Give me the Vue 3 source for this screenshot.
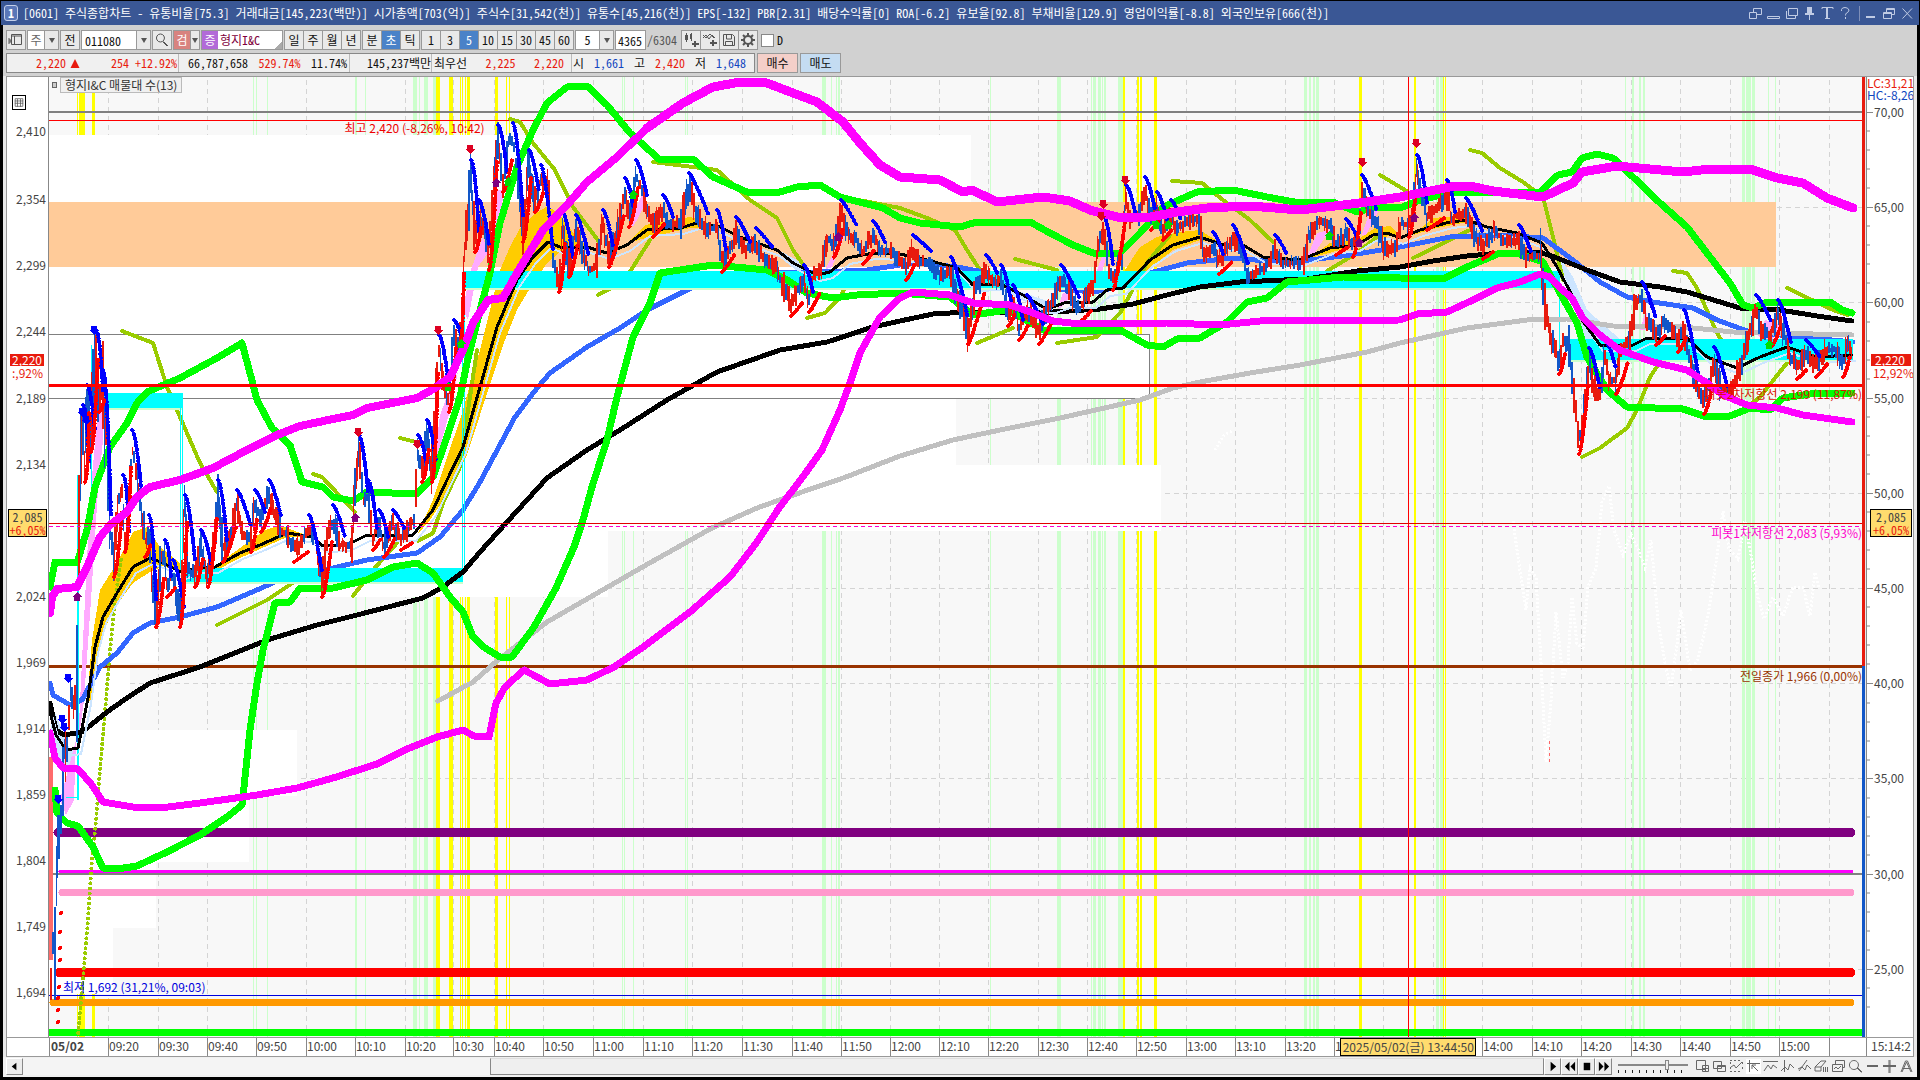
<script setup>
import { ref } from 'vue'

const VX = 49
const VY = 77
const VW = 1813
const VH = 960
const topPct = (y) => ({ top: ((y - VY) / VH) * 100 + '%' })

const code = ref('011080')
const count = ref('4365')

const periods = ['일', '주', '월', '년']
const units = ['분', '초', '틱']
const steps = ['1', '3', '5', '10', '15', '30', '45', '60']

const leftLabels = [
  ['2,410', 131], ['2,354', 199], ['2,299', 265], ['2,244', 331], ['2,189', 398], ['2,134', 464],
  ['2,024', 596], ['1,969', 662], ['1,914', 728], ['1,859', 794], ['1,804', 860], ['1,749', 926], ['1,694', 992],
]
const rightLabels = [
  ['70,00', 112], ['65,00', 207], ['60,00', 302], ['55,00', 398], ['50,00', 493],
  ['45,00', 588], ['40,00', 683], ['35,00', 778], ['30,00', 874], ['25,00', 969],
]
const minorTicks = Array.from({ length: 48 }, (_, i) => 112 + i * 19.05).filter((y, i) => i % 5 && y < 1030)

const gridX = [108, 158, 207, 256, 306, 355, 405, 453, 494, 543, 593, 643, 692, 742, 792, 841, 890, 939, 988, 1038, 1087, 1136, 1186, 1235, 1285, 1334, 1383, 1433, 1482, 1532, 1581, 1631, 1680, 1730, 1779, 1829]
const gridY = [207, 302, 398, 493, 588, 683, 778, 969]
const times = ['09:20', '09:30', '09:40', '09:50', '10:00', '10:10', '10:20', '10:30', '10:40', '10:50', '11:00', '11:10', '11:20', '11:30', '11:40', '11:50', '12:00', '12:10', '12:20', '12:30', '12:40', '12:50', '13:00', '13:10', '13:20', '1', '', '', '14:00', '14:10', '14:20', '14:30', '14:40', '14:50', '15:00', '']
const timeCells = [{ t: '05/02', w: 59 }].concat(
  times.map((t, i) => ({ t, w: (gridX[i + 1] ?? 1866) - gridX[i] })),
)

const greenBands = [[253, 1], [256, 1], [267, 1], [355, 2], [365, 1], [413, 4], [419, 1], [424, 4], [433, 3], [622, 1], [624, 1], [633, 1], [685, 1], [687, 1], [822, 4], [831, 1], [836, 1], [838, 2], [990, 1], [1057, 4], [1091, 1], [1093, 3], [1098, 3], [1102, 1], [1104, 2], [1118, 5], [1304, 3], [1309, 2], [1313, 2], [1316, 3], [1436, 3], [1440, 3], [1625, 1], [1632, 2], [1639, 2], [1643, 2], [1742, 3], [1746, 5], [1752, 3], [1768, 1], [1775, 1]]
const yellowBands = [[77, 1], [79, 6], [92, 3], [436, 4], [449, 4], [460, 1], [462, 1], [465, 1], [467, 3], [495, 3], [506, 1], [509, 1], [1123, 2], [1137, 2], [1140, 2], [1154, 3], [1359, 3], [1414, 2], [1443, 1], [1445, 1]]
const whiteBars = [[135, 67, 971], [267, 67, 960], [334, 64, 1149], [398, 67, 956], [465, 66, 1161], [531, 66, 608], [597, 66, 158], [663, 67, 130], [730, 66, 297], [796, 66, 249], [862, 66, 156], [928, 66, 113]]

const magUp = '50,613 52,597 57,589 77,587 87,567 100,537 110,525 127,512 137,497 150,487 180,480 213,468 247,450 277,435 300,426 333,419 353,415 367,408 417,398 435,388 450,377 463,350 473,323 488,300 503,298 517,273 543,230 567,205 587,182 617,157 647,128 683,103'
const magTop = '647,128 683,103 713,87 740,82 767,83 793,93 817,102 843,122 860,143 880,165 900,177 940,180 963,192 972,190 997,202 1043,197 1070,201 1090,210 1117,217 1150,217 1177,212 1207,208 1250,206 1300,210 1343,205 1367,202 1400,197 1450,187 1470,186 1493,191 1543,197 1573,183 1582,172 1617,166 1683,172 1710,169 1750,169 1777,178 1803,183 1827,198 1853,208'
const magLow = '50,733 55,758 63,768 78,769 92,785 103,802 133,807 160,808 200,803 257,795 297,788 333,778 377,764 407,749 437,737 463,730 474,736 489,737 496,703 505,687 524,670 550,684 587,680 614,667 646,645 690,612 730,577 757,542 779,508 802,478 822,450 840,410 850,383 860,353 880,317 900,298 913,292 950,295 973,303 1010,305 1033,313 1053,321 1080,324 1167,323 1220,325 1260,321 1400,320 1417,314 1447,312 1473,300 1497,288 1520,282 1540,274 1550,277 1560,288 1572,298 1582,317 1600,335 1620,350 1653,362 1687,370 1707,383 1723,395 1747,405 1777,408 1803,415 1852,422'
const grnUp = '50,587 55,562 77,563 87,530 95,487 110,447 127,423 137,403 147,392 180,378 217,358 242,343 250,373 257,400 272,428 290,445 302,482 323,487 333,497 353,501 367,492 417,494 433,477 447,437 460,397 467,363 480,310 490,273 500,223 517,167 533,130 547,103 567,87 587,86 607,105 630,133 660,160 693,159 713,177 747,192 780,192 797,187 820,185 840,197 883,208 900,218 920,223 960,227 973,223 1030,222 1050,233 1073,245 1093,253 1120,253 1140,233 1163,207 1197,192 1233,190 1267,197 1300,203 1333,202 1357,212 1377,207 1400,208 1420,200 1453,192 1493,192 1540,192 1558,175 1572,172 1582,158 1597,154 1613,158 1633,177 1660,203 1687,227 1710,257 1730,283 1743,305 1753,308 1767,302 1830,302 1842,310 1852,313'
const grnLow = '55,790 57,813 67,823 78,826 93,847 103,868 117,869 137,866 167,852 200,835 227,817 242,805 244,787 250,730 257,683 263,650 275,603 290,602 300,588 333,588 367,580 393,567 417,563 433,573 450,597 463,612 473,637 485,648 500,657 512,657 534,627 556,588 574,547 583,520 592,487 607,440 617,397 633,337 650,303 660,273 713,265 767,270 787,280 807,293 833,298 857,295 900,293 950,297 973,315 1007,310 1023,318 1043,330 1120,330 1147,345 1163,347 1177,339 1200,338 1227,322 1247,302 1267,298 1287,282 1343,277 1400,278 1443,279 1467,267 1500,253 1520,254 1543,262 1560,293 1577,323 1587,357 1607,390 1627,407 1683,409 1707,417 1730,416 1750,408 1770,410 1783,398 1817,393 1852,393'
const blueMa = '50,683 53,695 70,705 82,700 100,667 117,653 133,633 150,623 180,617 217,607 257,590 290,575 333,568 367,560 417,553 440,537 463,510 480,482 515,417 533,393 550,373 587,347 620,328 647,310 687,290 713,278 750,273 817,272 867,270 900,265 920,263 957,267 1000,275 1027,282 1060,289 1093,292 1120,287 1150,273 1187,263 1233,258 1277,262 1310,260 1350,255 1400,247 1450,237 1500,235 1543,238 1573,260 1600,282 1627,297 1653,302 1693,308 1717,320 1750,332 1800,337 1853,342'
const blackMa = '50,703 56,730 64,735 82,732 107,712 127,698 150,683 200,667 267,640 317,625 357,615 423,598 443,587 463,572 480,552 507,522 547,478 587,450 620,430 667,400 717,372 780,350 827,342 873,327 900,321 933,314 967,312 1053,312 1100,309 1133,304 1167,295 1200,287 1240,282 1307,279 1357,271 1400,267 1433,261 1467,256 1500,253 1540,252 1557,258 1587,270 1620,282 1660,287 1687,292 1740,308 1780,310 1817,316 1852,321'
const thinMa = '50,712 56,735 66,750 78,748 88,698 95,647 103,617 117,593 133,567 150,558 163,563 183,573 197,567 215,567 240,553 260,545 287,533 313,537 323,546 347,545 367,535 413,535 433,510 447,480 463,447 480,387 497,327 517,280 533,257 548,242 560,247 587,247 607,253 627,245 647,230 680,228 697,223 720,227 740,237 777,250 793,263 817,275 830,272 847,258 873,253 900,254 927,260 957,268 973,285 1000,284 1023,295 1043,307 1053,307 1067,302 1093,302 1107,290 1123,288 1150,260 1173,245 1200,237 1220,244 1243,245 1263,257 1300,260 1330,248 1357,245 1373,235 1387,233 1400,238 1420,230 1450,222 1467,220 1487,227 1517,233 1542,243 1557,267 1573,297 1582,320 1600,345 1633,345 1647,338 1687,338 1707,357 1737,368 1760,357 1787,347 1817,357 1852,355'
const grayMa = '438,701 473,682 498,660 547,622 646,565 712,528 757,508 802,492 846,477 900,456 953,440 1000,430 1060,418 1100,409 1140,400 1173,388 1200,382 1250,373 1300,365 1367,352 1400,343 1467,328 1527,320 1567,319 1613,326 1683,327 1733,332 1852,335'

const olive = [
  '122,331 153,343 167,387 200,463 217,492', '217,625 267,600 300,578 310,573', '313,474 322,477 355,512',
  '353,596 373,570 397,543', '400,438 420,443', '418,541 433,533 443,503 460,467 467,417 477,350',
  '510,119 520,122 533,143 555,170 573,207 600,243', '598,295 623,282 633,267 650,240',
  '653,162 717,170 750,200 777,218 793,250 807,270', '807,318 825,313 840,297 852,275',
  '843,197 900,208 927,218 955,230 967,250 980,270', '977,343 1013,328', '1015,259 1057,270',
  '1057,343 1097,337 1120,313 1147,263 1170,235', '1172,181 1202,183 1223,200 1250,220 1273,242',
  '1327,271 1357,253 1377,237', '1380,175 1400,187 1408,192', '1470,150 1482,153 1500,168 1523,182 1543,197 1553,237 1563,280',
  '1413,258 1470,230', '1582,457 1600,448 1627,428 1637,410 1650,377 1673,343',
  '1673,271 1687,273 1697,288 1717,333 1733,360', '1740,413 1760,397 1787,363', '1787,288 1833,310 1848,315',
]
const oliveDots = '121,560 115,600 110,650 106,700 100,770 96,820 92,860 88,920 82,990 78,1035'

const goldClouds = [
  '88,690 92,640 100,590 117,563 133,532 147,527 160,547 180,563 183,573 163,566 150,572 133,583 113,610 103,633 93,683 90,705',
  '215,566 240,548 265,530 280,525 300,533 313,537 287,537 260,549 240,558 215,571',
  '417,535 433,500 447,457 460,420 470,385 480,350 490,310 500,270 510,247 520,228 533,215 548,206 560,215 575,235 587,247 560,252 548,262 533,283 517,310 505,340 495,370 480,415 467,455 447,495 430,520',
  '627,243 645,225 690,217 720,227 690,228 650,237',
  '1107,290 1125,270 1140,247 1157,237 1180,232 1200,230 1220,243 1200,240 1173,250 1150,268 1123,290',
  '1310,258 1330,243 1357,240 1375,228 1390,226 1400,236 1373,237 1340,250',
  '1413,235 1433,218 1467,215 1467,222 1433,229',
]
const pinkClouds = [
  '78,745 83,640 90,500 97,420 103,405 103,440 98,490 91,600 84,700',
  '431,490 440,415 450,388 458,372 450,410 442,440',
  '463,310 470,272 483,237 488,253 478,267 468,320', '490,227 497,190 505,190 500,213 492,240',
  '630,220 643,193 646,203 633,227', '825,270 840,240 847,230 832,267', '1057,310 1063,293 1073,293 1062,307',
  '1097,270 1102,257 1106,257 1101,276', '1307,257 1317,233 1330,230 1312,257', '1362,235 1372,205 1378,212 1366,235',
  '60,800 68,770 76,740 74,800 66,815', '1640,330 1646,310 1650,330', '1757,335 1765,320 1780,325 1770,345',
]
const iceClouds = [
  '1557,253 1573,277 1587,310 1613,333 1620,340 1577,340 1582,313 1570,293',
  '957,268 980,280 1010,288 1053,303 1043,309 1023,298 1000,288 973,288', '50,705 56,715 70,750 76,745 72,765 60,765 52,745',
  '777,249 800,262 812,275 795,268',
]

const price = [
  50, 985, 52, 940, 54, 955, 56, 870, 59, 810, 61, 830, 63, 735, 65, 760, 68, 720, 70, 690, 72, 712, 76, 690, 78, 520, 82, 420, 84, 470, 86, 400, 90, 440, 95, 345, 98, 400, 102, 385, 107, 460, 110, 530, 113, 565, 118, 500, 122, 490, 124, 540, 128, 510, 131, 445, 135, 470, 140, 500, 144, 545, 148, 530, 151, 580, 155, 615, 160, 560, 164, 555, 166, 585, 172, 575, 179, 615, 184, 510, 188, 570, 194, 575, 200, 545, 207, 575, 212, 555, 217, 495, 222, 550, 230, 535, 236, 505, 242, 535, 250, 540, 254, 505, 260, 520, 268, 495, 273, 510, 280, 530, 286, 535, 293, 550, 302, 540, 308, 530, 316, 540, 321, 585, 326, 540, 332, 520, 340, 545, 350, 545, 358, 450, 363, 500, 367, 495, 372, 538, 378, 525, 383, 545, 392, 525, 400, 538, 410, 525, 414, 520, 417, 450, 421, 470, 426, 435, 431, 470, 436, 365, 438, 350, 442, 380, 448, 400, 453, 335, 458, 350, 462, 295, 464, 250, 470, 175, 474, 240, 478, 215, 484, 230, 488, 258, 492, 190, 497, 140, 502, 180, 508, 142, 512, 138, 516, 170, 522, 230, 528, 165, 534, 200, 540, 180, 547, 190, 552, 265, 558, 280, 562, 228, 568, 265, 575, 230, 580, 245, 588, 270, 594, 268, 602, 225, 608, 255, 616, 235, 624, 193, 628, 215, 635, 175, 640, 188, 646, 210, 652, 225, 662, 210, 668, 225, 680, 222, 688, 188, 696, 215, 708, 230, 716, 225, 721, 260, 730, 250, 735, 232, 745, 250, 755, 243, 762, 260, 772, 262, 780, 280, 790, 304, 797, 290, 803, 280, 808, 300, 813, 275, 820, 270, 828, 240, 833, 245, 840, 215, 848, 235, 856, 240, 862, 252, 872, 236, 880, 250, 890, 250, 900, 262, 905, 268, 912, 250, 920, 262, 930, 265, 940, 275, 950, 272, 958, 302, 967, 332, 975, 290, 985, 270, 993, 283, 1000, 280, 1007, 314, 1012, 300, 1018, 328, 1026, 310, 1038, 332, 1046, 310, 1052, 300, 1060, 280, 1068, 290, 1078, 311, 1085, 297, 1093, 287, 1097, 248, 1103, 232, 1108, 270, 1112, 278, 1122, 255, 1125, 200, 1130, 220, 1138, 212, 1144, 192, 1150, 218, 1156, 207, 1162, 228, 1170, 215, 1176, 228, 1190, 220, 1198, 220, 1203, 255, 1212, 247, 1218, 262, 1226, 249, 1232, 240, 1240, 250, 1247, 278, 1256, 270, 1264, 268, 1274, 250, 1282, 263, 1290, 263, 1303, 263, 1308, 234, 1318, 222, 1328, 225, 1335, 243, 1345, 234, 1352, 245, 1358, 232, 1361, 190, 1368, 210, 1376, 225, 1385, 250, 1394, 245, 1400, 224, 1408, 225, 1412, 214, 1416, 170, 1420, 190, 1426, 218, 1436, 207, 1446, 195, 1450, 220, 1456, 215, 1465, 213, 1474, 235, 1482, 247, 1490, 237, 1493, 230, 1500, 238, 1508, 243, 1518, 240, 1526, 260, 1532, 255, 1540, 255, 1545, 315, 1551, 338, 1558, 362, 1562, 340, 1568, 345, 1573, 390, 1578, 442, 1583, 410, 1588, 363, 1595, 398, 1600, 390, 1604, 355, 1609, 380, 1615, 382, 1620, 350, 1628, 340, 1634, 305, 1641, 297, 1646, 320, 1655, 333, 1663, 322, 1670, 330, 1677, 340, 1683, 325, 1690, 368, 1698, 393, 1703, 402, 1709, 380, 1713, 362, 1722, 394, 1730, 388, 1740, 365, 1750, 330, 1755, 310, 1761, 330, 1770, 335, 1777, 315, 1782, 330, 1790, 356, 1796, 367, 1805, 355, 1815, 365, 1825, 350, 1835, 350, 1842, 365, 1847, 342, 1851, 350,
]
const pts = []
for (let i = 0; i < price.length; i += 2) pts.push([price[i], price[i + 1]])

let seed = 7
const rnd = () => (seed = (seed * 16807) % 2147483647) / 2147483647

const bars = { red: '', blue: '' }
let k = 0
let x = 50
while (x < 1852) {
  while (k < pts.length - 2 && pts[k + 1][0] <= x) k++
  const [x0, y0] = pts[k]
  const [x1, y1] = pts[k + 1]
  const mid = y0 + ((y1 - y0) * (x - x0)) / (x1 - x0)
  const amp = Math.min(x < 110 ? 56 : 24, 6 + Math.abs(y1 - y0) / (x < 110 ? 2 : 4))
  const name = rnd() < (y1 < y0 ? 0.66 : 0.45) ? 'red' : 'blue'
  const w = rnd() < 0.45 ? 1 : 2
  const top = Math.round(mid - amp * (0.3 + rnd()))
  const bot = Math.round(mid + amp * (0.3 + rnd()))
  bars[name] += `M${x} ${top}h${w}V${bot}h-${w}Z`
  x += w
}

// Trailing stops: falling arcs after each peak, rising arcs after each trough.
let stopDown = ''
let stopUp = ''
for (let i = 1; i < pts.length - 1; i++) {
  const [px, y] = pts[i]
  const prev = pts[i - 1][1]
  const [nx, ny] = pts[i + 1]
  const [mx, my] = pts[Math.min(i + 2, pts.length - 1)]
  if (px < 74) continue
  if (y < prev && y < ny && ny - y > 8) {
    const ex = my > ny ? mx : nx + 4
    const ey = my > ny ? my - 14 : ny - 8
    stopDown += `M${px + 1} ${y - 15}Q${px + 5} ${y - 12} ${ex + 1} ${ey}`
  }
  if (y > prev && y > ny && y - ny > 8) {
    const ex = my < ny ? mx : nx + 3
    const ey = my < ny ? my + 22 : ny + 13
    stopUp += `M${px + 1} ${y + 12}Q${px + 4} ${y + 10} ${ex} ${ey}`
  }
}
let ghost = ''
let pen = 'M'
for (const [gx, y] of pts) {
  const gy = Math.round(340 + (y - 220) * 1.9)
  if (gx < 1200 || gy < 430) {
    pen = 'M'
    continue
  }
  ghost += `${pen}${gx - 32} ${gy}`
  pen = 'L'
}

const marks = [
  ...[[438, 330], [358, 432], [417, 444], [470, 149], [1125, 180], [1103, 204], [1101, 216], [1362, 162], [1416, 143]].map((p) => [...p, '#dd0022', 0]),
  ...[[94, 330], [82, 412], [86, 420], [68, 678], [62, 719], [64, 727], [58, 799]].map((p) => [...p, '#0000ff', 0]),
  ...[[77, 597], [355, 518], [496, 183], [838, 237], [1359, 243], [1414, 218]].map((p) => [...p, '#800080', 180]),
  ...[[448, 387], [461, 344], [508, 182], [633, 195], [1156, 225], [1168, 225], [1329, 236], [1769, 345]].map((p) => [...p, '#00dd00', 180]),
]
const redDots = [[61, 913], [60, 932], [60, 948], [60, 960], [59, 987], [58, 998], [58, 1010], [58, 1022]]

const winIcons = [
  { n: '분리', d: 'M1.5 6.5h7v6h-7zM5.5 6V2.5h8v6H9' },
  { n: '숨김', d: 'M1.5 10.5h12v2h-12z' },
  { n: '복사', d: 'M4.5 2.5h9v7h-9zM2.5 5v7.500h9V10' },
  { n: '고정', d: 'M5 1.500h5M5.500 2v5M7.500 2v12M6.500 2v5M8.500 2v5M9.500 2v5M3 8.500h9M3 7.500h9' },
  { n: '글꼴', d: 'M2 3V1.500h11V3M7.500 2v10M6.500 2v10M5 12.500h5' },
  { n: '도움말', d: 'M3.500 5V3.500Q4 1.500 7 1.500T11 4Q11 6 8.500 7Q7.500 8 7.500 9.500M7.500 11v2' },
]
const ctlIcons = [
  { n: '최소화', d: 'M2 10.500h9M2 11.500h9' },
  { n: '이전 크기', d: 'M1.500 6.500h8v6h-8zM2 7.500h7M4.500 6V2.500h8v6H10M5 3.500h7' },
  { n: '닫기', d: 'M2.500 2.500L12 12.500M12 2.500L2.500 12.500' },
]
const playIcons = [
  { n: '재생', d: 'M5 2L11 7L5 12Z' },
  { n: '뒤로', d: 'M7 2L2 7L7 12ZM13 2L8 7L13 12Z' },
  { n: '정지', d: 'M4 3H11V11H4Z' },
  { n: '앞으로', d: 'M2 2L7 7L2 12ZM8 2L13 7L8 12Z' },
]
const toolIcons = [
  { n: '새 창', d: 'M1.500 1.500h9v9h-9zM7.500 6.500h6v6h-6zM10.500 7v5M8 9.500h5' },
  { n: '겹치기', d: 'M1.500 2.500h8v7h-8zM5.500 6.500h8v6h-8zM6 7.500h7' },
  { n: '영역', d: 'M1 1.500h2M5 1.500h2M9 1.500h2M1 12.500h2M5 12.500h2M9 12.500h2M1.500 3v2M1.500 8v2M13.500 3v2M13.500 8v2M2 8L5 6L7 9L13 3' },
  { n: '십자선', d: 'M1 4.500h13M3.500 1v12M6 6L12 12M6 6h4M6 6v4', on: true },
  { n: '추세선', d: 'M0 2.500h15M1 12L5 6L8 10L10 6L14 9' },
  { n: '수직선', d: 'M4.500 1v12M1 12L5 8L8 11L10 5L14 9' },
  { n: '사선', d: 'M2 12L10 1M1 10L5 8L8 11L10 6L14 10' },
  { n: '전체 지우기', d: 'M1 8L7 2H12L7 8ZM1 8v4h6V8M9.500 8v5M11.500 8v5M13.500 8v5' },
  { n: '차트 목록', d: 'M1.500 5.500h10v7h-10zM4.500 5V1.500h9v7H12M3 10L5 8L7 10L10 7' },
  { n: '확대경', d: 'M6 1.500A4.500 4.500 0 1 1 5.900 1.500ZM9 9L13.500 13.500M9 8L14 13' },
  { n: '축소', d: 'M2 6.500h11M2 7.500h11' },
  { n: '확대', d: 'M1 6.500h13M1 7.500h13M7 1v13M8 1v13' },
  { n: '자동', d: 'M2 13L6.500 2H8.500L13 13M4 9.500h7M3 13L7.500 3L12 13' },
]
</script>

<template>
  <div class="window">
    <header class="titlebar">
      <span class="badge">1</span>
      <h1>[0601] 주식종합차트 - 유통비율[75.3] 거래대금[145,223(백만)] 시가총액[703(억)] 주식수[31,542(천)] 유통수[45,216(천)] EPS[-132] PBR[2.31] 배당수익률[0] ROA[-6.2] 유보율[92.8] 부채비율[129.9] 영업이익률[-8.8] 외국인보유[666(천)]</h1>
      <div class="winbtns">
        <button v-for="i in winIcons" :key="i.n" :aria-label="i.n"><svg viewBox="0 0 15 15"><path :d="i.d" /></svg></button>
        <i class="vsep"></i>
        <button v-for="i in ctlIcons" :key="i.n" :aria-label="i.n"><svg viewBox="0 0 15 15"><path :d="i.d" /></svg></button>
      </div>
    </header>

    <div class="toolbar">
      <button class="btn" aria-label="패널"><svg viewBox="0 0 16 16" class="ico"><path d="M3.500 2.500h10v10h-10zM3 4h11M6.500 4v8M1 6v6M2 7v4M3 8v2" /></svg></button>
      <div class="combo">
        <button class="face short">주</button><button class="drop" aria-label="종류 선택"></button>
      </div>
      <button class="btn">전</button>
      <div class="combo">
        <input v-model="code" class="code" aria-label="종목코드"><button class="drop" aria-label="종목 목록"></button>
      </div>
      <button class="btn" aria-label="검색"><svg viewBox="0 0 16 16" class="ico"><path d="M6.500 2A4 4 0 1 1 6.400 2ZM9.500 9.500L14 14M9 10L13 14" /></svg></button>
      <div class="combo"><button class="face red">검</button><button class="drop narrow" aria-label="검색 옵션"></button></div>
      <div class="stock"><b>증</b><span>형지I&amp;C</span></div>
      <div class="group"><button v-for="p in periods" :key="p" class="btn">{{ p }}</button></div>
      <div class="group"><button v-for="p in units" :key="p" class="btn" :class="{ on: p === '초' }">{{ p }}</button></div>
      <div class="group"><button v-for="p in steps" :key="p" class="btn" :class="{ on: p === '5' }">{{ p }}</button></div>
      <div class="combo"><button class="face five">5</button><button class="drop" aria-label="간격 선택"></button></div>
      <input v-model="count" class="count" aria-label="봉 개수">
      <span class="total">/6304</span>
      <div class="group">
        <button class="btn" aria-label="차트 추가"><svg viewBox="0 0 16 16" class="ico"><path d="M3.500 1v9M2.500 3v5M4.500 3v5M8.500 1v8M7.500 2v5M12.500 9v6M11.500 9v6M9 11.500h7M9 12.500h7" /></svg></button>
        <button class="btn" aria-label="지표 추가"><svg viewBox="0 0 16 16" class="ico"><path d="M1 6L4 3L7 7L10 3L13 6M1 3L4 6L8 2L12 6M11.500 8v6M10.500 8v6M8 10.500h7M8 11.500h7" /></svg></button>
        <button class="btn" aria-label="저장"><svg viewBox="0 0 16 16" class="ico"><path d="M2.500 2.500h9l2 2v9h-11zM5.500 3v4h5V3M4.500 13V9.500h7V13" /></svg></button>
        <button class="btn" aria-label="설정"><svg viewBox="0 0 16 16" class="ico gear"><circle cx="8" cy="8" r="4" /><path d="M8 1v3M8 12v3M1 8h3M12 8h3M3 3l2 2M11 11l2 2M13 3l-2 2M3 13l2-2" /></svg></button>
      </div>
      <label class="chk"><input type="checkbox">D</label>
    </div>

    <div class="quote">
      <div class="cells">
        <div class="cell c1"><em>2,220</em><svg class="tri" viewBox="0 0 10 10"><path d="M5 0L10 10H0Z" /></svg><em class="diff">254</em><em class="rate">+12.92%</em></div>
        <div class="cell c2"><span>66,787,658</span><em>529.74%</em><span>11.74%</span></div>
        <div class="cell c3">145,237백만</div>
        <div class="cell c4"><span>최우선</span><em>2,225</em><em>2,220</em></div>
        <div class="cell c5"><span>시</span><strong>1,661</strong><span>고</span><em>2,420</em><span>저</span><strong>1,648</strong></div>
      </div>
      <button class="buy">매수</button>
      <button class="sell">매도</button>
    </div>

    <main class="chart">
      <div class="row">
        <aside class="axis left">
          <button class="table" aria-label="데이터 표"><svg viewBox="0 0 15 17"><path d="M2.500 3.500h10v10h-10zM2 6.500h11M2 9.500h11M5.500 4v10M9.500 4v10" /></svg></button>
          <span v-for="l in leftLabels" :key="l[0]" class="lab" :style="topPct(l[1])">{{ l[0] }}</span>
          <div class="now" :style="topPct(360)">2,220</div>
          <span class="pct" :style="topPct(373)">:,92%</span>
          <div class="cursor" :style="topPct(523)">2,085<br><em>+6,05%</em></div>
        </aside>

        <section class="plot">
          <svg :viewBox="`${VX} ${VY} ${VW} ${VH}`" preserveAspectRatio="none" shape-rendering="crispEdges">
            <g stroke="#d4d4d4" stroke-dasharray="5 4">
              <line v-for="g in gridX" :key="g" :x1="g + 0.5" :x2="g + 0.5" y1="80" y2="1037" />
              <line v-for="g in gridY" :key="g" :y1="g + 0.5" :y2="g + 0.5" x1="49" x2="1862" />
            </g>
            <rect v-for="b in greenBands" :key="b[0]" :x="b[0]" y="77" :width="b[1]" height="960" fill="#ccffcc" />
            <rect v-for="b in yellowBands" :key="b[0]" :x="b[0]" y="77" :width="b[1]" height="960" fill="#ffff00" />
            <rect v-for="b in whiteBars" :key="b[0]" x="49" :y="b[0]" :width="b[2] - 49" :height="b[1]" fill="#fff" />
            <path d="M49 334.500H1149.500V398.500H49" fill="none" stroke="#808080" />
            <rect x="49" y="202" width="1727" height="65" fill="#ffcb99" />
            <path :d="ghost" fill="none" stroke="#fff" stroke-width="3" stroke-dasharray="2 2" />
            <path d="M1549.500 741v21" stroke="#ff6666" stroke-dasharray="3 3" />

            <g fill="none">
              <path d="M49 112H1862" stroke="#808080" stroke-width="2" />
              <path d="M49 120.500H1862" stroke="#ff0000" />
              <path d="M49 995.500H1862" stroke="#0000dd" />
              <path d="M49 666.500H1862" stroke="#993300" stroke-width="3" />
              <path d="M49 874H1862" stroke="#808080" stroke-width="2" />
              <g stroke-linecap="round">
                <path d="M58 832.500H1851" stroke="#800080" stroke-width="9" />
                <path d="M60 871.500H1852" stroke="#ff00ff" stroke-width="3" />
                <path d="M62 892.500H1851" stroke="#ff99cc" stroke-width="7" />
                <path d="M59 972.500H1851" stroke="#ff0000" stroke-width="9" />
                <path d="M53 1002.500H1851" stroke="#ff9900" stroke-width="7" />
              </g>
              <path d="M49 1032.500H1862" stroke="#00ff00" stroke-width="7" />
            </g>

            <rect x="49" y="757" width="4" height="203" fill="#ff6b6b" />
            <polygon v-for="p in iceClouds" :key="p" :points="p" fill="#cce5ff" />
            <polygon v-for="p in goldClouds" :key="p" :points="p" fill="#ffcc00" />
            <polygon v-for="p in pinkClouds" :key="p" :points="p" fill="#ffaaff" />

            <g fill="none" stroke-linecap="round" stroke-linejoin="round">
              <polyline v-for="p in olive" :key="p" :points="p" stroke="#99cc00" stroke-width="4" />
              <polyline :points="oliveDots" stroke="#99cc00" stroke-width="4" stroke-dasharray="0 5" />
              <polyline :points="blueMa" stroke="#3366ff" stroke-width="5" />
            </g>

            <g fill="#00ffff">
              <rect x="103" y="393" width="80" height="15" />
              <rect x="183" y="568" width="280" height="14" />
              <rect x="463" y="271" width="1097" height="17" />
              <rect x="1570" y="339" width="283" height="21" />
            </g>
            <path d="M103 409h80M183 583h280M463 289h1097M1570 361h283" stroke="#ccffcc" stroke-width="2" />
            <path d="M180.500 395V570M182.500 395V570M462.500 272V582M464.500 289V572M1559.500 272V360M78.500 475V800M77.500 475V800M66 797.500H79M91.500 345V500" stroke="#00ffff" />

            <g fill="none" stroke-linecap="round" stroke-linejoin="round">
              <polyline :points="grayMa" stroke="#c0c0c0" stroke-width="5" />
              <polyline :points="blackMa" stroke="#000" stroke-width="5" />
              <g transform="translate(3 6)"><polyline :points="thinMa" stroke="#cce5ff" stroke-width="2" /></g>
              <polyline :points="thinMa" stroke="#000" stroke-width="3" />
              <polyline :points="grnLow" stroke="#00ff00" stroke-width="7" />
              <polyline :points="grnUp" stroke="#00ff00" stroke-width="7" />
            </g>
            <path :d="bars.red" fill="#e81b0e" />
            <path :d="bars.blue" fill="#1257c8" />
            <g fill="none" stroke-width="4" stroke-linecap="round" stroke-dasharray="1 3">
              <path :d="stopDown" stroke="#0000ff" />
              <path :d="stopUp" stroke="#ff0000" />
            </g>
            <g fill="none" stroke="#ff00ff" stroke-linecap="round" stroke-linejoin="round">
              <polyline :points="magLow" stroke-width="7" />
              <polyline :points="magUp" stroke-width="8" />
              <polyline :points="magTop" stroke-width="9" />
            </g>
            <circle v-for="d in redDots" :key="d[1]" :cx="d[0]" :cy="d[1]" r="2" fill="#ff0000" />
            <path v-for="(m, i) in marks" :key="i" :fill="m[2]" :transform="`translate(${m[0]} ${m[1]}) rotate(${m[3]})`" d="M-3 -4H3V0H5L0 5L-5 0H-3Z" />

            <path d="M49 385.500H1862" stroke="#ff0000" stroke-width="3" />
            <path d="M49 523.500H1862" stroke="#e00000" />
            <path d="M49 526.500H1862" stroke="#ff00cc" stroke-dasharray="4 3" />
            <path d="M1408.500 77V1037" stroke="#ff0000" />
          </svg>
          <i class="marker"></i>
          <h2>형지I&amp;C 매물대 수(13)</h2>
          <span class="note high" :style="topPct(128)">최고 2,420 (-8,26%, 10:42)</span>
          <span class="note low" :style="topPct(987)">최저 1,692 (31,21%, 09:03)</span>
          <span class="note end r2" :style="topPct(394)">피봇2차저항선 2,199 (11,87%)</span>
          <span class="note end r1" :style="topPct(533)">피봇1차저항선 2,083 (5,93%)</span>
          <span class="note end prev" :style="topPct(676)">전일종가 1,966 (0,00%)</span>
        </section>

        <i class="edge"></i>

        <aside class="axis right">
          <div class="limits"><em>LC:31,21</em><br><strong>HC:-8,26</strong></div>
          <span v-for="l in rightLabels" :key="l[0]" class="lab" :style="topPct(l[1])">{{ l[0] }}</span>
          <i v-for="y in minorTicks" :key="y" :style="topPct(y)"></i>
          <div class="now" :style="topPct(360)">2,220</div>
          <span class="pct" :style="topPct(373)">12,92%</span>
          <div class="cursor" :style="topPct(523)">2,085<br><em>+6,05%</em></div>
        </aside>
      </div>

      <div class="times">
        <div class="slots"><span v-for="(c, i) in timeCells" :key="i" :style="{ width: (c.w / 1817) * 100 + '%' }">{{ c.t }}</span></div>
        <span class="last">15:14:2</span>
        <div class="stamp">2025/05/02(금) 13:44:50</div>
      </div>
    </main>

    <footer class="bottom">
      <button class="raised" aria-label="왼쪽으로"><svg viewBox="0 0 14 14"><path d="M9 3L4 7L9 11Z" /></svg></button>
      <div class="track"><div class="thumb"></div></div>
      <button v-for="i in playIcons" :key="i.n" class="raised" :aria-label="i.n"><svg viewBox="0 0 14 14"><path :d="i.d" /></svg></button>
      <div class="speed"><input type="range" min="0" max="100" value="71" aria-label="속도"><i></i></div>
      <div class="tools">
        <button v-for="i in toolIcons" :key="i.n" :aria-label="i.n" :class="{ on: i.on }"><svg viewBox="0 0 15 15"><path :d="i.d" /></svg></button>
      </div>
    </footer>
  </div>
</template>

<style>
body {
  margin: 0;
  background: #000;
}
</style>

<style scoped>
* {
  box-sizing: border-box;
}
.window {
  display: flex;
  flex-direction: column;
  height: 100vh;
  min-height: 600px;
  padding: 0 3px 3px;
  background: #000;
  color: #111;
  font: 12px/14px "Noto Sans Mono CJK KR", "Noto Sans CJK KR", sans-serif;
  overflow: hidden;
}
button,
input {
  font: inherit;
  color: inherit;
  margin: 0;
  padding: 0;
  border: 0;
  border-radius: 0;
  background: none;
}
em,
strong {
  font-style: normal;
  font-weight: 400;
}
em {
  color: #e81b0e;
}
strong {
  color: #1046c0;
}
svg {
  display: block;
}

.titlebar {
  display: flex;
  align-items: center;
  height: 24px;
  margin: 1px -2px 0;
  padding: 0 4px 0 3px;
  background: #3a5795;
  color: #fff;
}
.badge {
  width: 14px;
  height: 16px;
  border: 1px solid #c5d0ea;
  border-radius: 3px;
  background: #5a77b8;
  font-weight: 700;
  text-align: center;
}
h1 {
  flex: 1;
  margin: 0 0 0 5px;
  font: inherit;
  line-height: 20px;
  white-space: pre;
  overflow: hidden;
}
.winbtns {
  display: flex;
  align-items: center;
  gap: 3px;
}
.winbtns button,
.winbtns svg {
  width: 15px;
  height: 15px;
}
.winbtns path {
  fill: none;
  stroke: #c0cbe4;
}
.vsep {
  width: 1px;
  height: 15px;
  margin: 0 1px 0 3px;
  background: #7f8fb8;
}

.toolbar {
  display: flex;
  align-items: center;
  gap: 1px;
  height: 28px;
  padding: 4px 3px 2px;
  background: #d1d1d1;
}
.btn,
.face,
.code,
.count,
.drop,
.stock {
  height: 20px;
  border: 1px solid #999;
  background: #e9e9e9;
}
.btn {
  width: 20px;
  text-align: center;
  white-space: nowrap;
}
.ico {
  width: 16px;
  height: 16px;
  margin: 0 auto;
  fill: none;
  stroke: #555;
}
.gear circle {
  stroke-width: 2;
}
.gear path {
  stroke-width: 2;
}
.group {
  display: flex;
}
.group .btn + .btn {
  margin-left: -1px;
}
.btn.on {
  background: #4a82c8;
  color: #fff;
}
.combo {
  display: flex;
}
.face,
.code,
.count {
  background: #fff;
}
.short {
  width: 18px;
  color: #666;
}
.five {
  width: 25px;
}
.face.red {
  width: 18px;
  background: #d8837f;
  color: #fff;
}
.code {
  width: 56px;
  padding-left: 3px;
}
.count {
  width: 31px;
  padding-left: 2px;
}
.total {
  width: 33px;
  color: #555;
}
.drop {
  position: relative;
  width: 15px;
  margin-left: -1px;
}
.drop.narrow {
  width: 10px;
}
.drop::after {
  content: "";
  display: block;
  width: 0;
  margin: 0 auto;
  border: 3px solid transparent;
  border-top: 5px solid #555;
  border-bottom: 0;
}
.stock {
  display: flex;
  width: 82px;
  background: linear-gradient(135deg, #fff 92%, #aaa 92%);
  color: #80003c;
  line-height: 18px;
}
.stock b {
  width: 16px;
  margin-right: 2px;
  background: #b26ad8;
  color: #fff;
  font-weight: 400;
  text-align: center;
}
.chk {
  display: flex;
  align-items: center;
  gap: 3px;
}
.chk input {
  appearance: none;
  width: 13px;
  height: 13px;
  margin-left: 2px;
  border: 1px solid #888;
  background: #fff;
}

.quote {
  display: flex;
  height: 23px;
  padding: 0 3px 3px;
  gap: 2px;
  background: #d1d1d1;
}
.cells {
  display: flex;
  width: 749px;
  border: 1px solid #888;
  background: #f0f0f0;
}
.cell {
  display: flex;
  align-items: center;
  white-space: nowrap;
  border-right: 1px solid #bbb;
}
.cell:last-child {
  border: 0;
}
.c1 {
  width: 172px;
  padding-left: 29px;
}
.tri {
  width: 10px;
  height: 9px;
  margin-left: 4px;
  fill: #e81b0e;
}
.diff {
  width: 49px;
  text-align: right;
}
.rate {
  width: 48px;
  text-align: right;
}
.c2 {
  width: 171px;
  padding: 0 2px 0 9px;
  justify-content: space-between;
}
.c3 {
  width: 82px;
  justify-content: flex-end;
}
.c4 {
  width: 140px;
  padding: 0 7px 0 2px;
  justify-content: space-between;
}
.c5 {
  flex: 1;
  padding: 0 8px 0 1px;
  justify-content: space-between;
}
.buy,
.sell {
  width: 41px;
  border: 1px solid #999;
  background: #f4cfc9;
}
.sell {
  background: #c4dcf2;
}

.chart {
  display: flex;
  flex-direction: column;
  flex: 1;
  min-height: 0;
  padding: 0 3px;
  background: #e8e8e8;
  font-family: "Noto Sans CJK KR", sans-serif;
}
.row {
  display: flex;
  flex: 1;
  min-height: 0;
  border: 1px solid #999;
  border-bottom: 0;
}
.axis {
  position: relative;
  background: #fff;
  color: #444;
  overflow: hidden;
}
.left {
  width: 42px;
  border-right: 1px solid #888;
}
.right {
  width: 47px;
  border-left: 1px solid #888;
}
.lab,
.pct,
.now,
.cursor,
.note,
.right > i {
  position: absolute;
  transform: translateY(-50%);
  white-space: nowrap;
}
.left .lab {
  right: 2px;
}
.right .lab {
  left: 7px;
}
.right .lab::before {
  content: "";
  position: absolute;
  left: -7px;
  top: 7px;
  width: 6px;
  height: 1px;
  background: #888;
}
.right > i {
  left: 0;
  width: 3px;
  height: 1px;
  background: #888;
}
.now {
  left: 3px;
  width: 34px;
  background: #e81b0e;
  color: #fff;
  text-align: center;
  line-height: 12px;
}
.right .now {
  left: 4px;
  width: 40px;
  padding-left: 4px;
  text-align: left;
}
.pct {
  left: 5px;
  color: #e81b0e;
  line-height: 12px;
}
.right .pct {
  left: 6px;
}
.cursor {
  left: 1px;
  width: 39px;
  border: 1px solid #000;
  background: #ffdc6e;
  font-family: "Noto Sans Mono CJK KR", "Noto Sans CJK KR", sans-serif;
  text-align: center;
  line-height: 13px;
}
.right .cursor {
  left: 3px;
  width: 42px;
}
.table {
  margin: 18px 0 0 5px;
  border: 1px solid #000;
}
.table svg {
  width: 12px;
  height: 13px;
  fill: none;
  stroke: #555;
}
.limits {
  position: absolute;
  left: 0;
  top: 0;
  line-height: 12px;
}
.plot {
  position: relative;
  flex: 1;
  min-width: 0;
  background: #f8f8f8;
  overflow: hidden;
}
.plot > svg {
  position: absolute;
  width: 100%;
  height: 100%;
}
.marker {
  position: absolute;
  left: 3px;
  top: 5px;
  width: 5px;
  height: 6px;
  border: 1px solid #666;
  background: #ccc;
}
h2 {
  position: absolute;
  left: 11px;
  top: 0;
  margin: 0;
  padding: 0 4px;
  border: 1px solid #bbb;
  background: #f0f0f0;
  color: #333;
  font: inherit;
}
.high {
  left: 16.300%;
  color: #ee0000;
}
.low {
  left: 14px;
  color: #0000dd;
}
.end {
  right: 0;
}
.r2 {
  color: #dd1100;
}
.r1 {
  color: #ff00cc;
}
.prev {
  color: #993300;
}
.edge {
  width: 3px;
  margin-right: 1px;
  background: linear-gradient(#e81b0e 61.400%, #1257c8 61.400%);
}
.times {
  position: relative;
  display: flex;
  height: 20px;
  padding-left: 42px;
  border: 1px solid #999;
  background: #fff;
  color: #444;
}
.slots {
  display: flex;
  flex: 1;
}
.slots span {
  flex: none;
  border-left: 1px solid #888;
  line-height: 16px;
}
.slots span:first-child {
  padding-left: 1px;
  font-weight: 700;
}
.last {
  width: 47px;
  padding-left: 4px;
  border-left: 1px solid #888;
  line-height: 16px;
}
.stamp {
  position: absolute;
  left: 69.950%;
  top: 0;
  width: 136px;
  height: 18px;
  border: 1px solid #000;
  background: #ffdc6e;
  line-height: 15px;
  text-align: center;
  white-space: nowrap;
}

.bottom {
  display: flex;
  align-items: center;
  height: 20px;
  padding: 0 3px 1px;
  background: #f0f0f0;
}
.raised {
  width: 17px;
  height: 17px;
  border: 1px solid #888;
  border-top-color: #fff;
  border-left-color: #fff;
  background: #ececec;
}
.raised svg {
  width: 13px;
  height: 13px;
  margin: auto;
}
.track {
  flex: 1;
  height: 17px;
  background: #f4f4f4;
}
.thumb {
  width: 69.300%;
  height: 17px;
  margin-left: auto;
  border: 1px solid #888;
  border-top-color: #ddd;
  background: #efefef;
}
.speed {
  width: 70px;
  margin: 0 7px 0 6px;
}
.speed input {
  appearance: none;
  display: block;
  width: 70px;
  height: 10px;
  background: linear-gradient(#888, #888) center / 100% 2px no-repeat;
}
.speed input::-webkit-slider-thumb {
  appearance: none;
  width: 4px;
  height: 10px;
  border: 1px solid #888;
  background: #eee;
}
.speed i {
  display: block;
  height: 3px;
  background: repeating-linear-gradient(90deg, #222 0 1px, transparent 1px 7px);
}
.tools {
  display: flex;
  gap: 2px;
}
.tools button,
.tools svg {
  width: 15px;
  height: 15px;
}
.tools .on {
  background: #fff;
}
.tools path {
  fill: none;
  stroke: #666;
}
</style>
